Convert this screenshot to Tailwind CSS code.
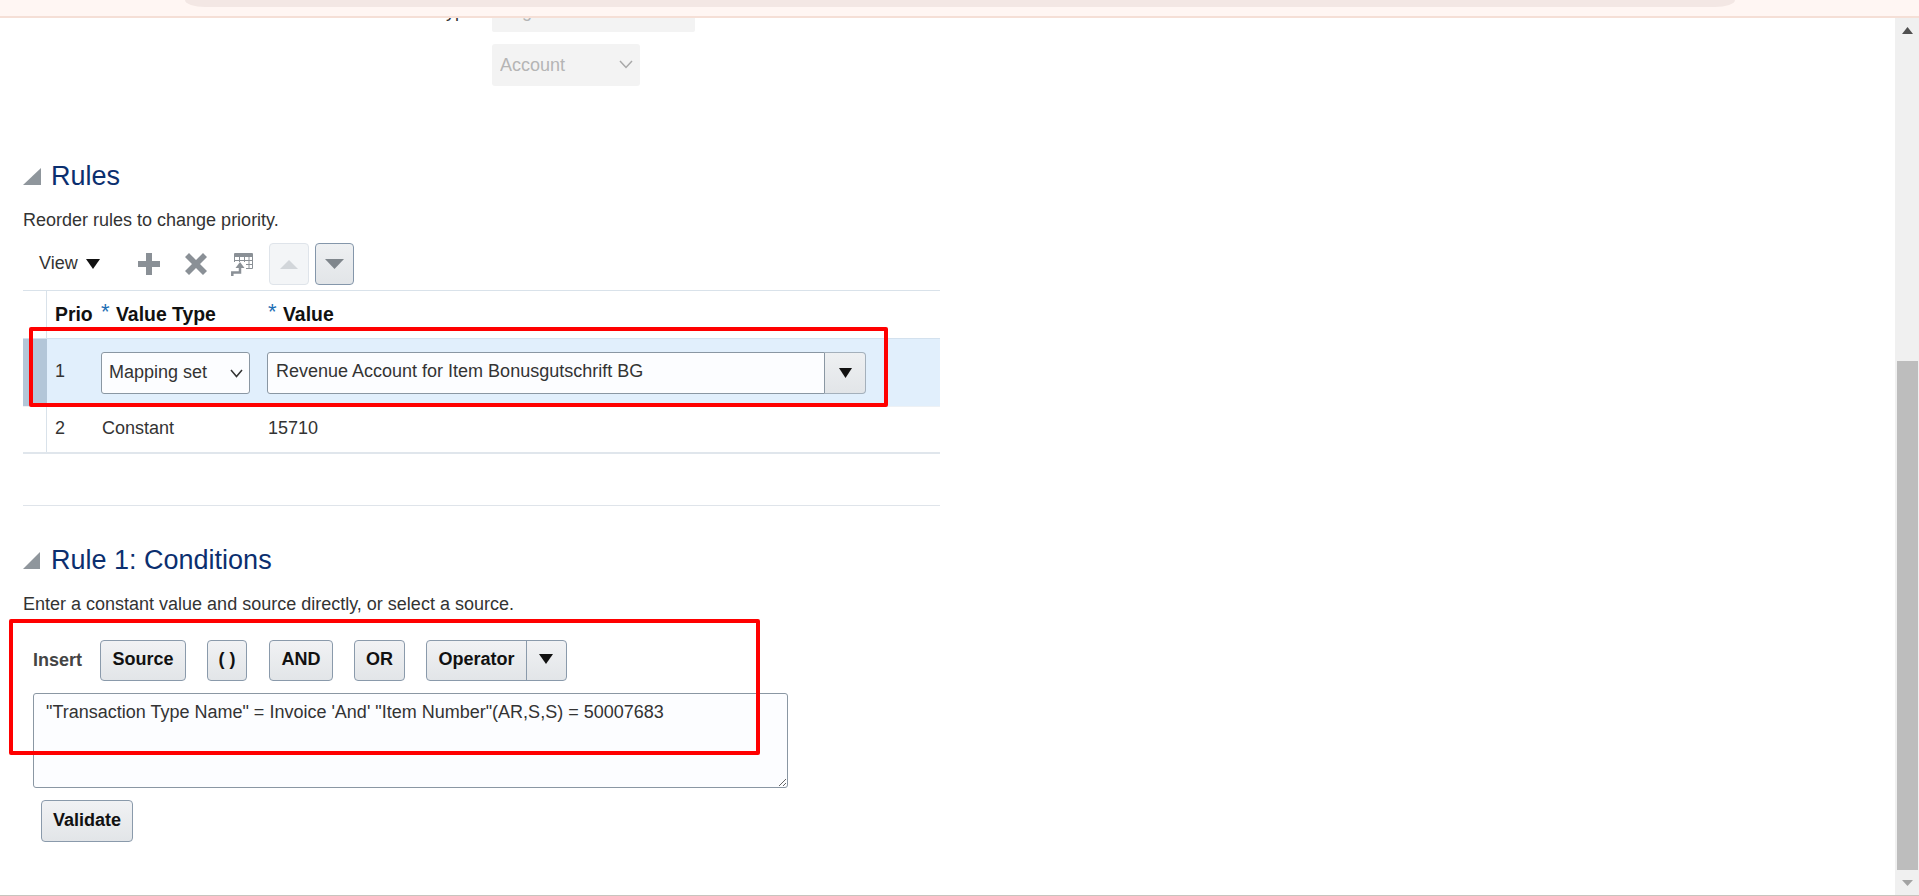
<!DOCTYPE html>
<html lang="en">
<head>
    <meta charset="UTF-8">
    <title>Rules</title>
    <script src="https://cdn.jsdelivr.net/npm/@tailwindcss/browser@4"></script>
</head>
<body class="h-screen overflow-hidden bg-white font-['Liberation_Sans',Arial,sans-serif] text-[#333]">
    <div class="flex h-[896px] flex-col border-b border-[#c8c4be]">
        <!-- Top bar, mostly scrolled away -->
        <div class="h-[18px] shrink-0 border-b-2 border-[#f5dfd6] bg-[#fff6f3]">
            <div class="ml-[185px] h-[7px] w-[1550px] rounded-bl-[20px_7px] rounded-br-[20px_7px] bg-[#f3e7e4]"></div>
        </div>

        <div class="flex min-h-0 flex-1">
            <div class="flex-1 overflow-hidden">
                <!-- Clipped field from the section above -->
                <div class="flex h-[14px]">
                    <div class="ml-[420px] h-[14px] w-[68px] overflow-hidden text-right text-[18px] leading-[20px]"><div class="-mt-[17px] pr-[13px]">Type</div></div>
                    <div class="ml-[4px] h-[14px] w-[203px] overflow-hidden rounded-b-[2px] bg-[#f3f3f3] pl-[8px] text-[18px] leading-[20px] text-[#b5b5b5]"><div class="-mt-[17px]">Segment</div></div>
                </div>
                <div class="relative ml-[492px] mt-[12px] h-[42px] w-[148px]">
                    <select disabled class="block h-full w-full appearance-none rounded-[3px] bg-[#f3f3f3] pl-[8px] text-[18px] text-[#b5b5b5]">
                        <option>Account</option>
                    </select>
                    <svg class="absolute right-[7px] top-[16px] h-[9px] w-[14px]" viewBox="0 0 14 9" fill="none"><path d="M1 1L7 7.500L13 1" stroke="#a8a8a8" stroke-width="1.500"/></svg>
                </div>

                <div class="ml-[23px] w-[917px]">
                    <!-- Rules -->
                    <div class="mt-[72px] flex h-[36px] items-center">
                        <svg class="h-[17px] w-[18px]" viewBox="0 0 18 17"><path d="M18 0V17H0Z" fill="#8f969c"/></svg>
                        <h2 class="ml-[10px] pt-[1px] text-[27px] text-[#0b2f6f]">Rules</h2>
                    </div>
                    <p class="mt-[14px] text-[18px] leading-[24px]">Reorder rules to change priority.</p>

                    <!-- Toolbar -->
                    <div class="mt-[11px] flex h-[42px] items-center">
                        <span class="ml-[16px] -mt-[2px] text-[18px]">View</span>
                        <svg class="ml-[8px] h-[10px] w-[14px]" viewBox="0 0 14 10"><path d="M0 0H14L7 10Z" fill="#111"/></svg>
                        <svg class="ml-[38px] h-[22px] w-[22px]" viewBox="0 0 22 22"><path d="M8 0H14V8H22V14H14V22H8V14H0V8H8Z" fill="#8a9096"/></svg>
                        <svg class="ml-[25px] h-[22px] w-[22px]" viewBox="0 0 22 22"><path d="M4 0L11 7L18 0L22 4L15 11L22 18L18 22L11 15L4 22L0 18L7 11L0 4Z" fill="#8a9096"/></svg>
                        <svg class="ml-[24px] h-[23px] w-[22px]" viewBox="0 0 22 23" fill="none">
                            <path d="M3.500 0H21.500V4H3.500Z" fill="#8a9096"/>
                            <path d="M3.500 .5V15.500H21.500V.5M3.500 7.500H21.500M3.500 11.500H21.500M8.500 .5V15.500M13.500 .5V15.500M18 .5V15.500" stroke="#8a9096"/>
                            <path d="M0 9H15V23H0Z" fill="#fff"/>
                            <path d="M1.300 23V19.500H9V14" stroke="#8a9096" stroke-width="2.500"/>
                            <path d="M4.500 15L9 9L13.500 15Z" fill="#8a9096"/>
                        </svg>
                        <button class="ml-[16px] flex h-[42px] w-[40px] items-center justify-center rounded-[4px] border border-[#dfe4ea] bg-[#f3f5f7]">
                            <svg class="h-[9px] w-[18px]" viewBox="0 0 18 9"><path d="M9 0L18 9H0Z" fill="#d2d6da"/></svg>
                        </button>
                        <button class="ml-[6px] flex h-[42px] w-[39px] items-center justify-center rounded-[4px] border border-[#8496aa] bg-linear-to-b from-[#eef0f2] to-[#e2e5e8]">
                            <svg class="h-[10px] w-[19px]" viewBox="0 0 19 10"><path d="M0 0H19L9.500 10Z" fill="#7f868c"/></svg>
                        </button>
                    </div>

                    <!-- Rules table -->
                    <div class="mt-[5px] border-t border-[#d9e2ea]">
                        <div class="flex h-[47px] items-center text-[19.4px] font-bold text-[#111]">
                            <div class="h-full w-[24px] border-r border-[#d9e2ea]"></div>
                            <div class="w-[54px] pl-[8px]">Prio</div>
                            <div class="w-[167px]"><span class="inline-block w-[15px] align-[2px] text-[22px] font-normal leading-[10px] text-[#1f6fb5]">*</span>Value Type</div>
                            <div><span class="inline-block w-[15px] align-[2px] text-[22px] font-normal leading-[10px] text-[#1f6fb5]">*</span>Value</div>
                        </div>
                        <div class="flex h-[68px] items-center border-t border-[#d3e1ee] bg-[#e1effc] text-[18px]">
                            <div class="h-full w-[24px] bg-[#b3c6d8]"></div>
                            <div class="-mt-[2px] w-[54px] pl-[8px]">1</div>
                            <div class="relative h-[42px] w-[149px]">
                                <select class="block h-full w-full appearance-none rounded-[3px] border border-[#8a97a3] bg-[#fcfdff] pb-[1px] pl-[7px]">
                                    <option>Mapping set</option>
                                </select>
                                <svg class="absolute right-[7px] top-[17px] h-[9px] w-[13px]" viewBox="0 0 13 9" fill="none"><path d="M1 1L6.500 7.500L12 1" stroke="#333" stroke-width="1.500"/></svg>
                            </div>
                            <input value="Revenue Account for Item Bonusgutschrift BG" class="ml-[17px] h-[42px] w-[558px] rounded-l-[3px] border border-[#8a97a3] bg-[#fcfdff] pb-[2px] pl-[8px]">
                            <button class="flex h-[42px] w-[41px] items-center justify-center rounded-r-[4px] border border-l-0 border-[#a4b0bb] bg-linear-to-b from-[#eef0f2] to-[#e2e5e8]">
                                <svg class="h-[10px] w-[13px]" viewBox="0 0 13 10"><path d="M0 0H13L6.500 10Z" fill="#111"/></svg>
                            </button>
                        </div>
                        <div class="flex h-[46px] items-center border-t border-[#edf1f5] pb-[2px] text-[18px]">
                            <div class="h-[46px] w-[24px] border-r border-[#d9e2ea]"></div>
                            <div class="w-[55px] pl-[8px]">2</div>
                            <div class="w-[166px]">Constant</div>
                            <div>15710</div>
                        </div>
                        <div class="h-[2px] bg-[#e0e6ec]"></div>
                    </div>
                    <div class="mt-[51px] border-t border-[#dfe4ea]"></div>

                    <!-- Rule 1 conditions -->
                    <div class="mt-[36px] flex h-[36px] items-center">
                        <svg class="h-[17px] w-[17px]" viewBox="0 0 17 17"><path d="M17 0V17H0Z" fill="#8f969c"/></svg>
                        <h2 class="ml-[11px] pt-[1px] text-[27px] text-[#0b2f6f]">Rule 1: Conditions</h2>
                    </div>
                    <p class="mt-[14px] text-[18px] leading-[24px]">Enter a constant value and source directly, or select a source.</p>

                    <div class="mt-[24px] flex h-[41px] items-center text-[18px] font-bold text-[#111]">
                        <span class="ml-[10px] w-[67px] text-[#444]">Insert</span>
                        <button class="h-[41px] w-[86px] rounded-[4px] border border-[#8a9aab] bg-linear-to-b from-[#f1f2f4] to-[#e2e5e8] pb-[3px] font-bold">Source</button>
                        <button class="ml-[21px] h-[41px] w-[40px] rounded-[4px] border border-[#8a9aab] bg-linear-to-b from-[#f1f2f4] to-[#e2e5e8] pb-[3px] font-bold">( )</button>
                        <button class="ml-[22px] h-[41px] w-[64px] rounded-[4px] border border-[#8a9aab] bg-linear-to-b from-[#f1f2f4] to-[#e2e5e8] pb-[3px] font-bold">AND</button>
                        <button class="ml-[21px] h-[41px] w-[51px] rounded-[4px] border border-[#8a9aab] bg-linear-to-b from-[#f1f2f4] to-[#e2e5e8] pb-[3px] font-bold">OR</button>
                        <div class="ml-[21px] flex h-[41px] w-[141px] items-center rounded-[4px] border border-[#8a9aab] bg-linear-to-b from-[#f1f2f4] to-[#e2e5e8]">
                            <span class="w-[100px] border-r border-[#8a9aab] pb-[3px] text-center leading-[37px]">Operator</span>
                            <svg class="-mt-[3px] ml-[12px] h-[10px] w-[14px]" viewBox="0 0 14 10"><path d="M0 0H14L7 10Z" fill="#111"/></svg>
                        </div>
                    </div>

                    <textarea class="ml-[10px] mt-[12px] block h-[95px] w-[755px] rounded-[3px] border border-[#8a97a3] bg-[#fcfdff] px-[12px] py-[5px] text-[18px]">"Transaction Type Name" = Invoice 'And' "Item Number"(AR,S,S) = 50007683</textarea>

                    <button class="ml-[18px] mt-[12px] block h-[42px] w-[92px] rounded-[4px] border border-[#8a9aab] bg-linear-to-b from-[#f1f2f4] to-[#e2e5e8] pb-[2px] text-[18px] font-bold text-[#111]">Validate</button>
                </div>
            </div>

            <!-- Scrollbar -->
            <div class="flex w-[24px] shrink-0 flex-col items-center bg-[#f0f0f0] pl-[1px]">
                <svg class="mt-[9px] h-[7px] w-[11px]" viewBox="0 0 11 7"><path d="M5.500 0L11 7H0Z" fill="#505050"/></svg>
                <div class="mt-[327px] h-[509px] w-[21px] bg-[#bdbdbd]"></div>
                <svg class="mt-[10px] h-[6px] w-[11px]" viewBox="0 0 11 6"><path d="M0 0H11L5.500 6Z" fill="#a3a3a3"/></svg>
            </div>
        </div>
    </div>

    <!-- Red annotation boxes on top of the screenshot -->
    <div class="absolute left-[29px] top-[327px] h-[80px] w-[859px] rounded-[2px] border-[4px] border-[#ff0000]"></div>
    <div class="absolute left-[9px] top-[619px] h-[136px] w-[751px] rounded-[2px] border-[4px] border-[#ff0000]"></div>
</body>
</html>
